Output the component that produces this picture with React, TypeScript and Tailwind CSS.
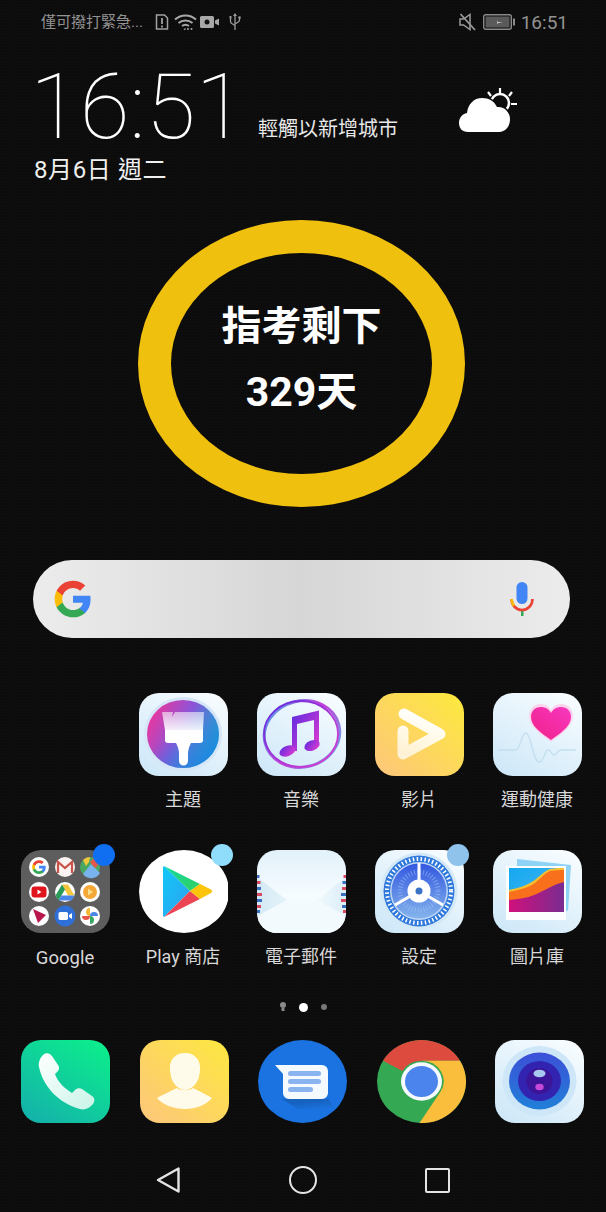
import React from 'react';

const FONT = "font-['Roboto','Noto_Sans_CJK_TC',sans-serif]";

function GLogo({ x = 0, y = 0, s = 1 }: { x?: number; y?: number; s?: number }) {
    return (
        <g transform={`translate(${x} ${y}) scale(${s})`}>
            <path fill="#4285F4" d="M22.56 12.25c0-.78-.07-1.53-.2-2.25H12v4.26h5.92c-.26 1.37-1.04 2.53-2.22 3.31v2.77h3.57c2.08-1.92 3.28-4.74 3.28-8.09z" />
            <path fill="#34A853" d="M12 23c2.97 0 5.46-.98 7.28-2.66l-3.57-2.77c-.98.66-2.23 1.06-3.71 1.06-2.86 0-5.29-1.93-6.16-4.53H2.18v2.84C3.99 20.53 7.7 23 12 23z" />
            <path fill="#FBBC05" d="M5.84 14.09c-.22-.66-.35-1.36-.35-2.09s.13-1.43.35-2.09V7.07H2.18C1.43 8.55 1 10.22 1 12s.43 3.45 1.18 4.93l2.85-2.22.81-.62z" />
            <path fill="#EA4335" d="M12 5.38c1.62 0 3.06.56 4.21 1.64l3.15-3.15C17.45 2.09 14.97 1 12 1 7.7 1 3.99 3.47 2.18 7.07l3.66 2.84c.87-2.6 3.3-4.53 6.16-4.53z" />
        </g>
    );
}

function Svg({ children }: { children: React.ReactNode }) {
    return (
        <svg viewBox="0 0 89 83" className="w-[89px] h-[83px] block">
            {children}
        </svg>
    );
}

function LightTile({ id }: { id: string }) {
    return (
        <>
            <defs>
                <linearGradient id={id} x1="0.8" y1="0" x2="0.2" y2="1">
                    <stop offset="0" stopColor="#f7fcff" />
                    <stop offset="1" stopColor="#cfe8f8" />
                </linearGradient>
            </defs>
            <rect width="89" height="83" rx="20" fill={`url(#${id})`} />
        </>
    );
}

function ThemeIcon() {
    return (
        <Svg>
            <LightTile id="t0" />
            <defs>
                <linearGradient id="t1" x1="0" y1="0.25" x2="1" y2="0.75">
                    <stop offset="0" stopColor="#f0359c" />
                    <stop offset="0.45" stopColor="#8a55d8" />
                    <stop offset="1" stopColor="#0cc0c8" />
                </linearGradient>
                <linearGradient id="t2" x1="0" y1="0" x2="1" y2="1">
                    <stop offset="0.4" stopColor="#2a80e0" stopOpacity="0" />
                    <stop offset="1" stopColor="#1a78e8" />
                </linearGradient>
                <linearGradient id="t3" x1="0" y1="0" x2="0" y2="1">
                    <stop offset="0" stopColor="#ffffff" stopOpacity="0.55" />
                    <stop offset="1" stopColor="#ffffff" stopOpacity="0.9" />
                </linearGradient>
            </defs>
            <ellipse cx="44" cy="41" rx="39" ry="37" fill="#d4e6f8" />
            <ellipse cx="44" cy="41" rx="36" ry="34" fill="url(#t1)" />
            <ellipse cx="44" cy="41" rx="36" ry="34" fill="url(#t2)" />
            <path d="M23 19h11l-1 5 3-5h29l-1 18H26z" fill="url(#t3)" />
            <path d="M26 37h38v10a3 3 0 0 1-3 3H29a3 3 0 0 1-3-3z" fill="#fff" />
            <path d="M37 50h15c-2 4-3 7-3 11v7a4.5 4.5 0 0 1-9 0v-7c0-4-1-7-3-11z" fill="#fff" />
        </Svg>
    );
}

function MusicIcon() {
    return (
        <Svg>
            <LightTile id="m0" />
            <defs>
                <linearGradient id="m1" x1="0" y1="0" x2="1" y2="1">
                    <stop offset="0" stopColor="#5a2be0" />
                    <stop offset="1" stopColor="#e83ccf" />
                </linearGradient>
                <linearGradient id="m2" x1="0" y1="0" x2="1" y2="1">
                    <stop offset="0" stopColor="#3fb0ea" />
                    <stop offset="0.5" stopColor="#c83ed8" />
                    <stop offset="1" stopColor="#55b8ea" />
                </linearGradient>
            </defs>
            <ellipse cx="45" cy="41" rx="38" ry="33" fill="none" stroke="url(#m2)" strokeWidth="3" transform="rotate(-14 45 41)" />
            <ellipse cx="44" cy="41" rx="37" ry="33" fill="none" stroke="url(#m1)" strokeWidth="1.800" />
            <path d="M35 24l27-6.500V51h-5V27l-17 4v27h-5z" fill="url(#m1)" />
            <ellipse cx="30.500" cy="58" rx="8.500" ry="5" fill="url(#m1)" transform="rotate(-22 30.500 58)" />
            <ellipse cx="55" cy="52.500" rx="8" ry="5" fill="url(#m1)" transform="rotate(-22 55 52.500)" />
        </Svg>
    );
}

function VideoIcon() {
    return (
        <Svg>
            <defs>
                <linearGradient id="v0" x1="1" y1="0" x2="0" y2="1">
                    <stop offset="0" stopColor="#fdea3c" />
                    <stop offset="1" stopColor="#fdc67c" />
                </linearGradient>
                <linearGradient id="v1" x1="0.6" y1="0" x2="0.3" y2="1">
                    <stop offset="0" stopColor="#ffffff" />
                    <stop offset="1" stopColor="#ffffff" stopOpacity="0.72" />
                </linearGradient>
            </defs>
            <rect width="89" height="83" rx="20" fill="url(#v0)" />
            <path d="M29 21L65 41L28 61V38" fill="none" stroke="url(#v1)" strokeWidth="11" strokeLinecap="round" strokeLinejoin="round" />
        </Svg>
    );
}

function HealthIcon() {
    return (
        <Svg>
            <LightTile id="h0" />
            <defs>
                <linearGradient id="h1" x1="1" y1="0" x2="0" y2="1">
                    <stop offset="0" stopColor="#f838c0" />
                    <stop offset="1" stopColor="#f02088" />
                </linearGradient>
            </defs>
            <path d="M5 57h17c6 0 6-17 11-17s7 29 13 29 5-12 9-12 3 5 6 5 3-5 7-5h15" fill="none" stroke="#c2deef" strokeWidth="1.300" />
            <path d="M58 50C47 42 36 34 36 24c0-7 5-12 11-12 5 0 9 2 11 6 2-4 6-6 11-6 6 0 11 5 11 12 0 10-11 18-22 26z" fill="#fbd3ec" transform="translate(0 -1)" />
            <path d="M58 47C48 40 38 33 38 24c0-6 4-10 10-10 4 0 8 2 10 6 2-4 6-6 10-6 6 0 10 4 10 10 0 9-10 16-20 23z" fill="url(#h1)" />
        </Svg>
    );
}

function GoogleFolder() {
    return (
        <Svg>
            <rect width="89" height="83" rx="20" fill="#5e5d5d" />
            {/* row 1 */}
            <circle cx="18" cy="17" r="10" fill="#fff" />
            <GLogo x={10.500} y={9.500} s={0.630} />
            <circle cx="44" cy="17" r="10" fill="#fbf3f1" />
            <path d="M37 23V12l7 6 7-6v11" fill="none" stroke="#c8534a" strokeWidth="2.200" />
            <circle cx="69" cy="17" r="10" fill="#4aa860" />
            <path d="M62 24l8-10 9 9a10 10 0 0 1-17 1z" fill="#78b3ee" />
            <path d="M74 7a10 10 0 0 1 4 7l-4 4-5-6z" fill="#e8564a" />
            <path d="M62 10a10 10 0 0 1 7-3l-1 5-3 4z" fill="#f4c63c" />
            {/* row 2 */}
            <circle cx="18" cy="42" r="10" fill="#fff" />
            <rect x="10.500" y="36.500" width="15" height="11" rx="3" fill="#e0141c" />
            <path d="M16.500 39.500v5l4-2.500z" fill="#fff" />
            <circle cx="44" cy="42" r="10" fill="#fff" />
            <path d="M41 34.500h6l6.500 11H47z" fill="#f4c63c" />
            <path d="M41 34.500L34.500 45.500l3 5L44 39.500z" fill="#2a9a58" />
            <path d="M37.500 50.500h13l3-5H40.500z" fill="#4a86e8" />
            <circle cx="69" cy="42" r="10" fill="#fff" />
            <path d="M62 42a7 7 0 0 1 14 0a7 7 0 0 1-14 0z" fill="#f4a838" />
            <path d="M67 38.500v7l5-3.500z" fill="#fde08c" />
            {/* row 3 */}
            <circle cx="18" cy="66" r="10" fill="#fff" />
            <path d="M12 59l13 6-8 8z" fill="#b8174c" />
            <circle cx="44" cy="66" r="10.500" fill="#2e6fd8" />
            <rect x="37.500" y="62" width="9.500" height="8" rx="1.800" fill="#fff" />
            <path d="M48 65l3-2v6l-3-2z" fill="#fff" />
            <circle cx="69" cy="66" r="10" fill="#fff" />
            <path d="M69 66a4 4 0 0 1-8 0z" fill="#e8564a" />
            <path d="M69 66a4 4 0 0 1 0-8z" fill="#f4b838" />
            <path d="M69 66a4 4 0 0 1 8 0z" fill="#4a86e8" />
            <path d="M69 66a4 4 0 0 1 0 8z" fill="#3aa860" />
        </Svg>
    );
}

function PlayIcon() {
    return (
        <Svg>
            <defs>
                <linearGradient id="p0" x1="0" y1="0" x2="1" y2="1">
                    <stop offset="0" stopColor="#10c8f8" />
                    <stop offset="1" stopColor="#30a0f0" />
                </linearGradient>
                <linearGradient id="p1" x1="0" y1="0" x2="1" y2="1">
                    <stop offset="0" stopColor="#14d8a0" />
                    <stop offset="1" stopColor="#30d060" />
                </linearGradient>
            </defs>
            <ellipse cx="45" cy="41.500" rx="45" ry="41.500" fill="#fff" />
            <path d="M24 18a2 2 0 0 1 1-2l26 25-26 26a2 2 0 0 1-1-2z" fill="url(#p0)" />
            <path d="M25 16l36 18-10 7z" fill="url(#p1)" />
            <path d="M25 67l36-18-10-8z" fill="#ec4452" />
            <path d="M61 34l11 5.500a2 2 0 0 1 0 3.500l-11 6-10-8z" fill="#fcc50c" />
        </Svg>
    );
}

function MailIcon() {
    return (
        <Svg>
            <defs>
                <linearGradient id="e0" x1="0.5" y1="0" x2="0.5" y2="1">
                    <stop offset="0" stopColor="#e2f1fa" />
                    <stop offset="0.55" stopColor="#f6fcff" />
                    <stop offset="1" stopColor="#eaf6fc" />
                </linearGradient>
                <linearGradient id="e2" x1="0" y1="0" x2="1" y2="0">
                    <stop offset="0" stopColor="#d2e9f5" />
                    <stop offset="1" stopColor="#e6f3fa" />
                </linearGradient>
                <linearGradient id="e3" x1="1" y1="0" x2="0" y2="0">
                    <stop offset="0" stopColor="#dceef8" />
                    <stop offset="1" stopColor="#f0f9fd" />
                </linearGradient>
                <clipPath id="e1">
                    <rect width="89" height="83" rx="20" />
                </clipPath>
            </defs>
            <rect width="89" height="83" rx="20" fill="url(#e0)" />
            <g clipPath="url(#e1)">
                <path d="M0 27l30 23L0 66z" fill="url(#e2)" />
                <path d="M89 27L60 50l29 16z" fill="url(#e3)" />
                <path d="M0 70l30-20q14 8 30 0l29 20v13H0z" fill="#f2fafe" />
                <path d="M0 25h2.500v3H0zM0 37h4v3H0zM0 49h5v3H0zM0 60h3v3H0z" fill="#3a6ec0" />
                <path d="M0 31h3.500v3H0zM0 43h5v3H0zM0 55h4v3H0z" fill="#d84860" />
                <path d="M86.500 25H89v3h-2.500zM85 37h4v3h-4zM84 49h5v3h-5zM86 60h3v3h-3z" fill="#d84860" />
                <path d="M85.500 31H89v3h-3.500zM84 43h5v3h-5zM85 55h4v3h-4z" fill="#3a6ec0" />
            </g>
        </Svg>
    );
}

function SettingsIcon() {
    return (
        <Svg>
            <LightTile id="s0" />
            <defs>
                <linearGradient id="s1" x1="0.5" y1="0" x2="0.5" y2="1">
                    <stop offset="0" stopColor="#3358e0" />
                    <stop offset="1" stopColor="#84b4ec" />
                </linearGradient>
            </defs>
            <circle cx="44" cy="41" r="38.500" fill="#d4e9f8" />
            <circle cx="44" cy="41" r="35.500" fill="#2f78dc" />
            <circle cx="44" cy="41" r="32" fill="none" stroke="#fff" strokeWidth="4" strokeDasharray="1.500 2.400" />
            <circle cx="44" cy="41" r="29" fill="#fff" opacity="0.7" />
            <circle cx="44" cy="41" r="27.500" fill="url(#s1)" />
            <circle cx="44" cy="41" r="19" fill="none" stroke="#a8c8f4" strokeWidth="5" strokeDasharray="1 2" opacity="0.5" />
            <path d="M44 41V13M44 41L20 55M44 41L68 55" stroke="#fff" strokeWidth="3" />
            <circle cx="44" cy="41" r="11.500" fill="#fff" />
            <circle cx="44" cy="41" r="3.500" fill="#3a72c8" />
        </Svg>
    );
}

function GalleryIcon() {
    return (
        <Svg>
            <LightTile id="g0" />
            <defs>
                <linearGradient id="g1" x1="0" y1="0" x2="1" y2="1">
                    <stop offset="0" stopColor="#14a8f0" />
                    <stop offset="1" stopColor="#50b8f0" />
                </linearGradient>
                <linearGradient id="g2" x1="0" y1="0" x2="1" y2="0">
                    <stop offset="0" stopColor="#d0107c" />
                    <stop offset="1" stopColor="#7a2c90" />
                </linearGradient>
                <clipPath id="g3">
                    <rect x="16" y="18" width="55" height="44" />
                </clipPath>
            </defs>
            <path d="M24 9l54 6-3 46-4-1V18L24 17z" fill="#8ed2f6" />
            <rect x="13" y="16" width="60" height="54" fill="#fbfdff" />
            <g clipPath="url(#g3)">
                <rect x="16" y="18" width="55" height="44" fill="url(#g1)" />
                <path d="M16 40c8-2 14-3 21-7 8-4 12-11 20-14 5-1 10-1 14-2v45H16z" fill="#f4c030" />
                <path d="M16 42c8-2 14-3 21-6 8-4 13-12 20-15 5-1 10-1 14-1v42H16z" fill="#f8701c" />
                <path d="M16 50c10-1 18-2 25-5 10-4 20-11 30-13v30H16z" fill="url(#g2)" />
            </g>
        </Svg>
    );
}

function PhoneIcon() {
    return (
        <Svg>
            <defs>
                <linearGradient id="d0" x1="0.85" y1="0" x2="0.15" y2="1">
                    <stop offset="0" stopColor="#0ced8c" />
                    <stop offset="1" stopColor="#14b2aa" />
                </linearGradient>
                <linearGradient id="d1" x1="0" y1="0" x2="1" y2="1">
                    <stop offset="0" stopColor="#ffffff" />
                    <stop offset="1" stopColor="#c8f4e8" />
                </linearGradient>
            </defs>
            <rect width="89" height="83" rx="20" fill="url(#d0)" />
            <path d="M22 15c3-3 7-2 9 1l6 9c2 3 1 5-1 7l-2 2c3 8 9 14 17 19l3-3c2-2 5-2 7-1l10 7c3 2 3 5 1 8l-2 2c-3 3-8 4-11 3C37 63 22 46 18 27c-1-4 1-9 4-12z" fill="url(#d1)" />
        </Svg>
    );
}

function ContactsIcon() {
    return (
        <Svg>
            <defs>
                <linearGradient id="c0" x1="1" y1="0" x2="0" y2="1">
                    <stop offset="0" stopColor="#fde840" />
                    <stop offset="1" stopColor="#fdc67c" />
                </linearGradient>
            </defs>
            <rect width="89" height="83" rx="20" fill="url(#c0)" />
            <path d="M30 30c-1-11 6-17 15-17s16 6 15 17c0 3-1 5-1 7-2 7-8 13-14 13s-12-6-14-13c0-2-1-4-1-7z" fill="#fffbea" />
            <path d="M37 48c3 3 13 3 16 0 8 4 14 7 19 10-6 7-16 11-27 11s-22-4-28-11c5-3 12-6 20-10z" fill="#fffbea" />
        </Svg>
    );
}

function MessagesIcon() {
    return (
        <Svg>
            <defs>
                <linearGradient id="b0" x1="0.4" y1="0.3" x2="0.8" y2="1">
                    <stop offset="0" stopColor="#000" stopOpacity="0.25" />
                    <stop offset="1" stopColor="#000" stopOpacity="0" />
                </linearGradient>
            </defs>
            <ellipse cx="44.500" cy="41.500" rx="44.500" ry="41.500" fill="#1a73e0" />
            <path d="M24 59h46l8 10H40z" fill="url(#b0)" opacity="0.6" />
            <path d="M17 25h47a6 6 0 0 1 6 6v22a6 6 0 0 1-6 6H31a6 6 0 0 1-6-6V34z" fill="#f4fafe" />
            <rect x="30" y="31" width="33" height="5" rx="2.500" fill="#8ab4f0" />
            <rect x="30" y="39" width="33" height="5" rx="2.500" fill="#8ab4f0" />
            <rect x="30" y="47" width="25" height="5" rx="2.500" fill="#8ab4f0" />
        </Svg>
    );
}

function ChromeIcon() {
    return (
        <Svg>
            <g transform="translate(44.500 41.500) scale(1 0.933)">
                <circle r="44.500" fill="#34a853" />
                <path d="M-38.500-22.300A44.500 44.500 0 0 1 38.500-22.300H0a22 22 0 0 0-19 11z" fill="#dd4b3e" />
                <path d="M38.500-22.300A44.500 44.500 0 0 1-2 44.500L19 11a22 22 0 0 0-19-33.300z" fill="#fbbe3c" />
                <circle r="20.500" fill="#f6f9fe" />
                <circle r="16.500" fill="#4a84ec" />
            </g>
        </Svg>
    );
}

function CameraIcon() {
    return (
        <Svg>
            <LightTile id="k0" />
            <defs>
                <linearGradient id="k1" x1="0.5" y1="0" x2="0.5" y2="1">
                    <stop offset="0" stopColor="#3c50d8" />
                    <stop offset="1" stopColor="#2080d8" />
                </linearGradient>
            </defs>
            <ellipse cx="44.500" cy="41" rx="37" ry="35" fill="#cde6f8" />
            <ellipse cx="44.500" cy="41" rx="30.500" ry="28.500" fill="url(#k1)" />
            <ellipse cx="44.500" cy="41" rx="21.500" ry="20" fill="#3224b0" />
            <ellipse cx="44.500" cy="41" rx="13" ry="13" fill="#3c1498" />
            <ellipse cx="44.500" cy="33.500" rx="6" ry="3.800" fill="#a8c8f0" />
            <ellipse cx="44.500" cy="47" rx="4.200" ry="3.200" fill="#c848d8" />
        </Svg>
    );
}

function SimAlert() {
    return (
        <svg viewBox="0 0 14 16" className="w-[14px] h-[16px]">
            <path d="M1.500 1h8l3 3v11h-11z" fill="none" stroke="#a0a0a0" strokeWidth="1.500" />
            <path d="M7 4v6M7 11.500v2" stroke="#a0a0a0" strokeWidth="1.800" />
        </svg>
    );
}

function Wifi() {
    return (
        <svg viewBox="0 0 23 18" className="w-[23px] h-[18px]">
            <path d="M1 6.500C7 1 16 1 22 6.500M4.500 10c4-3.500 10-3.500 14 0M8 13c2-1.500 5-1.500 7 0" fill="none" stroke="#a8a8a8" strokeWidth="2" />
            <path d="M11.500 14.500l-2 2.500h2z" fill="#a8a8a8" />
            <circle cx="14" cy="16" r="1" fill="#a8a8a8" />
            <circle cx="17.500" cy="16" r="1" fill="#a8a8a8" />
        </svg>
    );
}

function CamStatus() {
    return (
        <svg viewBox="0 0 20 14" className="w-[20px] h-[14px]">
            <path d="M0 2.500A1.500 1.500 0 0 1 1.500 1h11A1.500 1.500 0 0 1 14 2.500v9a1.500 1.500 0 0 1-1.500 1.500h-11A1.500 1.500 0 0 1 0 11.500z" fill="#a8a8a8" />
            <circle cx="7" cy="7" r="2.500" fill="#111" />
            <path d="M15 5.500l4-2v7l-4-2z" fill="#a8a8a8" />
        </svg>
    );
}

function Usb() {
    return (
        <svg viewBox="0 0 12 18" className="w-[12px] h-[18px]">
            <path d="M6 1v16M1.500 5v3.500c0 1.500 1 2 2 2.500L6 12.500M10.500 5v2c0 1.500-1 2-2 2.500L6 11" fill="none" stroke="#9a9a9a" strokeWidth="1.300" />
            <path d="M6 0l2 3H4z" fill="#9a9a9a" />
            <rect x="0.500" y="3" width="2" height="2.500" fill="#9a9a9a" />
            <circle cx="10.500" cy="4.500" r="1.300" fill="#9a9a9a" />
        </svg>
    );
}

function Mute() {
    return (
        <svg viewBox="0 0 17 18" className="w-[17px] h-[18px]">
            <path d="M1 6h3.500L11 1.500v15L4.500 12H1z" fill="none" stroke="#9a9a9a" strokeWidth="1.500" />
            <path d="M1.500 1L16 17" stroke="#9a9a9a" strokeWidth="1.800" />
        </svg>
    );
}

function Battery() {
    return (
        <svg viewBox="0 0 32 16" className="w-[32px] h-[16px]">
            <rect x="0.700" y="0.700" width="27.600" height="14.600" rx="2" fill="none" stroke="#8a8a8a" strokeWidth="1.400" />
            <rect x="2.500" y="2.500" width="24" height="11" fill="#5a5a5a" />
            <rect x="30" y="4.500" width="2" height="7" fill="#8a8a8a" />
            <path d="M9 8.500h5l1-2v1.500h5l-5 1v1.500l-1-2z" fill="#d8d8d8" />
        </svg>
    );
}

function Weather() {
    return (
        <svg viewBox="0 0 60 48" className="w-[60px] h-[48px]">
            <circle cx="42" cy="17" r="9" fill="none" stroke="#fff" strokeWidth="2.500" />
            <path d="M42 2v6M30 6l3 4M54 6l-3 4M53 18h6" stroke="#fff" strokeWidth="2.200" />
            <path d="M10 46C4 46 1 42 1 37c0-5 3-9 8-10 1-9 7-15 15-15 7 0 12 3 15 9 7-1 13 5 13 12 0 8-5 13-11 13z" fill="#000" stroke="#0e0d0e" strokeWidth="3" />
            <path d="M10 46C4 46 1 42 1 37c0-5 3-9 8-10 1-9 7-15 15-15 7 0 12 3 15 9 7-1 13 5 13 12 0 8-5 13-11 13z" fill="#fff" />
        </svg>
    );
}

function Mic() {
    return (
        <svg viewBox="0 0 24 34" className="w-[24px] h-[34px]">
            <rect x="6.500" y="0" width="11" height="22" rx="5.500" fill="#4285f4" />
            <path d="M11 28v6h2.500v-6z" fill="#34a853" />
            <path d="M1.500 17c0 6 4.500 11 10.500 11s10.500-5 10.500-11" fill="none" stroke="#ea4335" strokeWidth="2.600" />
            <path d="M1.500 17c0 2.500 1 5 2.500 6.800" fill="none" stroke="#fbbc05" strokeWidth="2.600" />
        </svg>
    );
}

const Badge = ({ color }: { color: string }) => (
    <span className={`absolute -top-[6px] right-[-5px] w-[22px] h-[22px] rounded-full ${color}`} />
);

function AppCell({ icon, label, badge, labelClass }: { icon: React.ReactNode; label?: string; badge?: string; labelClass?: string }) {
    return (
        <div className="flex flex-col items-center">
            <div className="relative">
                {icon}
                {badge && <Badge color={badge} />}
            </div>
            {label && <span className={`${labelClass ?? 'mt-[14px] text-[18px]'} leading-[20px] text-[#d8d8d8] whitespace-nowrap`}>{label}</span>}
        </div>
    );
}

export default function App() {
    return (
        <div className={`${FONT} w-[606px] h-[1212px] overflow-hidden flex flex-col bg-[#0d0c0d] bg-[radial-gradient(#131212_1px,transparent_1px)] bg-[length:3px_3px] text-white`}>
            {/* status bar */}
            <div className="h-[44px] flex items-center justify-between pl-[41px] pr-[38px] text-[#929292]">
                <div className="flex items-center">
                    <span className="text-[15px] w-[114px] whitespace-nowrap">僅可撥打緊急...</span>
                    <SimAlert />
                    <span className="ml-[5px]"><Wifi /></span>
                    <span className="ml-[3px]"><CamStatus /></span>
                    <span className="ml-[9px]"><Usb /></span>
                </div>
                <div className="flex items-center">
                    <Mute />
                    <span className="ml-[7px]"><Battery /></span>
                    <span className="ml-[6px] text-[19px] leading-none">16:51</span>
                </div>
            </div>

            {/* clock + weather */}
            <div className="h-[100px] pl-[30px] flex items-end">
                <span className="text-[91px] leading-[70px] mb-[2px] font-thin w-[228px] whitespace-nowrap">16:51</span>
                <span className="text-[20px] leading-[24px] mb-[3px] text-[#e8e8e8] whitespace-nowrap">輕觸以新增城市</span>
                <span className="ml-[60px] mb-[10px]"><Weather /></span>
            </div>
            <div className="mt-[12px] pl-[34px] text-[24px] leading-[28px] tracking-[0.6px] text-[#f0f0f0]">8月6日 週二</div>

            {/* countdown ring */}
            <div className="mt-[36px] ml-[138px] w-[327px] h-[287px] rounded-[50%] border-[33px] border-[#f0c00f] flex flex-col items-center justify-center font-bold pb-[9px]">
                <span className="text-[40px] leading-[48px]">指考剩下</span>
                <span className="mt-[17px] text-[41px] leading-[48px]">329天</span>
            </div>

            {/* search */}
            <div className="mt-[53px] ml-[33px] w-[537px] h-[78px] rounded-full bg-gradient-to-r from-[#ececec] via-[#d6d6d6] to-[#ececec] flex items-center justify-between pl-[20px] pr-[36px]">
                <svg viewBox="0 0 24 24" className="w-[40px] h-[40px]"><GLogo /></svg>
                <Mic />
            </div>

            {/* app grid */}
            <div className="mt-[55px] pl-[6px] grid grid-cols-[repeat(5,118px)] gap-y-[40px]">
                <div />
                <AppCell icon={<ThemeIcon />} label="主題" />
                <AppCell icon={<MusicIcon />} label="音樂" />
                <AppCell icon={<VideoIcon />} label="影片" />
                <AppCell icon={<HealthIcon />} label="運動健康" />
                <AppCell icon={<GoogleFolder />} label="Google" badge="bg-[#0f6ff0]" labelClass="mt-[15px] text-[18.500px]" />
                <AppCell icon={<PlayIcon />} label="Play 商店" badge="bg-[#8fdcfb]" />
                <AppCell icon={<MailIcon />} label="電子郵件" />
                <AppCell icon={<SettingsIcon />} label="設定" badge="bg-[#8fc3ec]" />
                <AppCell icon={<GalleryIcon />} label="圖片庫" />
            </div>

            {/* page dots */}
            <div className="mt-[33px] h-[12px] flex items-center justify-center gap-[13px]">
                <svg viewBox="0 0 6 10" className="w-[6px] h-[10px]">
                    <circle cx="3" cy="3" r="3" fill="#8a8a8a" />
                    <rect x="1.500" y="6" width="3" height="3" fill="#8a8a8a" />
                </svg>
                <span className="w-[9px] h-[9px] rounded-full bg-white" />
                <span className="w-[6px] h-[6px] rounded-full bg-[#777]" />
            </div>

            {/* dock */}
            <div className="mt-[27px] pl-[21px] pr-[22px] flex justify-between">
                <PhoneIcon />
                <ContactsIcon />
                <MessagesIcon />
                <ChromeIcon />
                <CameraIcon />
            </div>

            {/* nav buttons */}
            <div className="mt-[43px] flex items-center justify-center gap-[108px] pr-[2px]">
                <svg viewBox="0 0 26 28" className="w-[26px] h-[28px]">
                    <path d="M23.500 2.500v23L3 14z" fill="none" stroke="#e4e4e4" strokeWidth="2.400" strokeLinejoin="round" />
                </svg>
                <span className="w-[28px] h-[28px] rounded-full border-[2.400px] border-[#e4e4e4]" />
                <span className="w-[25px] h-[25px] rounded-[2px] border-[2.400px] border-[#e4e4e4]" />
            </div>
        </div>
    );
}
